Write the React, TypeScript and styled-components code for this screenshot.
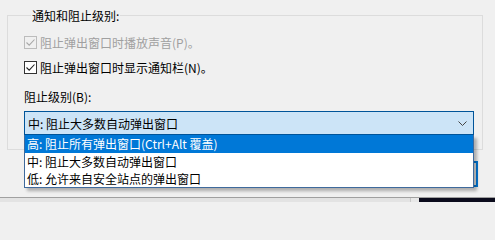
import * as React from 'react';
import styled, { createGlobalStyle } from 'styled-components';

const GlobalStyle = createGlobalStyle`
  html, body {
    margin: 0;
    padding: 0;
    background: #f0f0f0;
  }
  body {
    font-family: "Noto Sans CJK SC", "Noto Sans", "Liberation Sans", sans-serif;
    font-size: 12px;
    color: #000;
  }
`;

const Window = styled.div`
  width: 495px;
  height: 202px;
  display: flex;
  flex-direction: column;
  overflow: hidden;
`;

const Body = styled.div`
  flex: 1;
  display: flex;
  flex-direction: column;
`;

const GroupBox = styled.fieldset`
  margin: 7px 0 0 7px;
  width: 476px;
  box-sizing: border-box;
  border: 1px solid #dcdcdc;
  padding: 0 9px 14px 16px;
  display: flex;
  flex-direction: column;
  min-width: 0;
`;

const Legend = styled.legend`
  padding: 0 1px;
  margin-left: 7px;
  line-height: 17px;
  height: 16px;
`;

const CheckRow = styled.label<{ $disabled?: boolean; $gap: number }>`
  display: flex;
  align-items: center;
  height: 18px;
  margin-top: ${(p) => p.$gap}px;
  gap: 3px;
  color: ${(p) => (p.$disabled ? '#a0a0a0' : '#000')};
  white-space: nowrap;
`;

const Box = styled.span<{ $disabled?: boolean }>`
  width: 13px;
  height: 13px;
  box-sizing: border-box;
  border: 1px solid ${(p) => (p.$disabled ? '#bcbcbc' : '#333')};
  background: ${(p) => (p.$disabled ? '#f0f0f0' : '#fff')};
  display: flex;
  align-items: center;
  justify-content: center;
  flex: none;
`;

const FieldLabel = styled.div`
  height: 18px;
  line-height: 18px;
  margin-top: 12px;
`;

const ComboWrap = styled.div`
  position: relative;
  margin-top: 5px;
  width: 450px;
`;

const Combo = styled.div`
  height: 24px;
  box-sizing: border-box;
  border: 1px solid #005499;
  background: #cce4f7;
  display: flex;
  align-items: center;
  justify-content: space-between;
  padding: 0 6px 0 3px;
`;

const DropList = styled.ul`
  position: absolute;
  left: 0;
  top: 24px;
  width: 450px;
  box-sizing: border-box;
  margin: 0;
  padding: 0;
  list-style: none;
  background: #fff;
  border: 1px solid #3f6a9c;
  border-top: none;
  box-shadow: 3px 3px 3px rgba(0, 0, 0, 0.28);
  z-index: 2;
`;

const Option = styled.li<{ $selected?: boolean }>`
  height: 17px;
  line-height: 17px;
  padding-left: 2px;
  white-space: nowrap;
  background: ${(p) => (p.$selected ? '#0078d7' : '#fff')};
  color: ${(p) => (p.$selected ? '#fff' : '#000')};
  &:first-child {
    height: 18px;
    line-height: 18px;
  }
`;

const ButtonRow = styled.div`
  display: flex;
  justify-content: flex-end;
  padding-right: 17px;
  margin-top: 11px;
`;

const Button = styled.div`
  width: 75px;
  height: 26px;
  box-sizing: border-box;
  border: 2px solid #0078d7;
  background: #e1e1e1;
`;

const Footer = styled.div`
  height: 4px;
  border-top: 1px solid #a0a0a0;
  display: flex;
`;

const FooterPanel = styled.div`
  width: 410px;
  background: #e3e3e3;
  border-right: 1px solid #c8c8c8;
`;

const FooterGap = styled.div`
  width: 8px;
  background: #e8e8e8;
`;

const Taskbar = styled.div`
  flex: 1;
  background: #0b0b1c;
`;

function Check({ disabled }: { disabled?: boolean }) {
  return (
    <Box $disabled={disabled}>
      <svg width="11" height="11" viewBox="0 0 11 11">
        <path
          d="M1.5 5.5 L4.2 8.2 L9.5 2.5"
          fill="none"
          stroke={disabled ? '#a8a8a8' : '#222'}
          strokeWidth="1.1"
        />
      </svg>
    </Box>
  );
}

function Chevron() {
  return (
    <svg width="9" height="5" viewBox="0 0 9 5">
      <path d="M0.5 0.5 L4.5 4.5 L8.5 0.5" fill="none" stroke="#444" strokeWidth="1" />
    </svg>
  );
}

const options = [
  '高: 阻止所有弹出窗口(Ctrl+Alt 覆盖)',
  '中: 阻止大多数自动弹出窗口',
  '低: 允许来自安全站点的弹出窗口',
];

export default function App() {
  return (
    <Window>
      <GlobalStyle />
      <Body>
        <GroupBox>
          <Legend>通知和阻止级别:</Legend>
          <CheckRow $disabled $gap={10}>
            <Check disabled />
            阻止弹出窗口时播放声音(P)。
          </CheckRow>
          <CheckRow $gap={7}>
            <Check />
            阻止弹出窗口时显示通知栏(N)。
          </CheckRow>
          <FieldLabel>阻止级别(B):</FieldLabel>
          <ComboWrap>
            <Combo>
              <span>中: 阻止大多数自动弹出窗口</span>
              <Chevron />
            </Combo>
            <DropList>
              {options.map((o, i) => (
                <Option key={i} $selected={i === 0}>
                  {o}
                </Option>
              ))}
            </DropList>
          </ComboWrap>
        </GroupBox>
        <ButtonRow>
          <Button />
        </ButtonRow>
      </Body>
      <Footer>
        <FooterPanel />
        <FooterGap />
        <Taskbar />
      </Footer>
    </Window>
  );
}
